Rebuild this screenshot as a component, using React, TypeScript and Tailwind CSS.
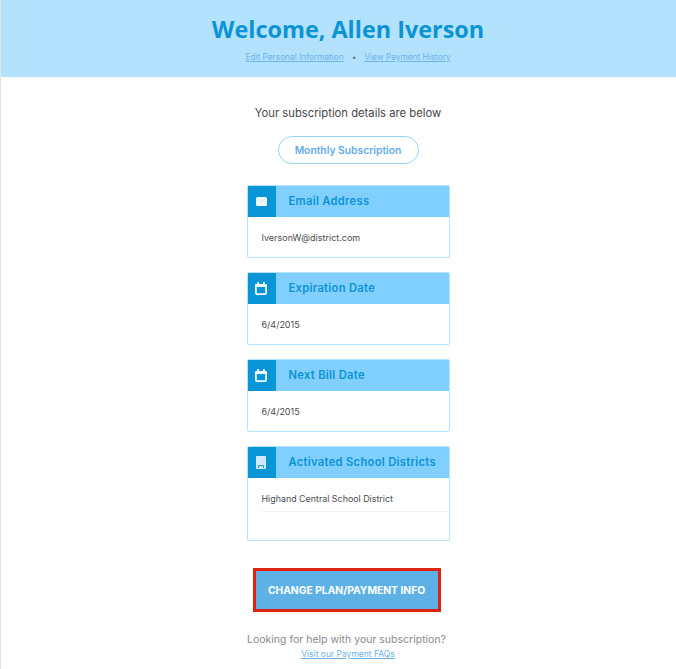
const sans = "font-['Inter','Liberation_Sans',sans-serif]"

const MailIcon = () => (
  <svg width="11" height="9" viewBox="0 0 11 9">
    <rect width="11" height="9" rx="1.5" fill="#eef8ff" />
    <path d="M0.5 1.5 L5.5 5 L10.5 1.5" fill="none" stroke="#cfeaff" strokeWidth="0.8" />
  </svg>
)

const CalendarIcon = () => (
  <svg width="12" height="13" viewBox="0 0 12 13">
    <rect x="0.9" y="2.9" width="10.2" height="9.2" rx="1.2" fill="none" stroke="#f2faff" strokeWidth="1.8" />
    <rect x="0" y="2.4" width="12" height="2.6" fill="#f2faff" />
    <rect x="2.2" y="0" width="1.8" height="3" fill="#f2faff" />
    <rect x="8" y="0" width="1.8" height="3" fill="#f2faff" />
  </svg>
)

const BookIcon = () => (
  <svg width="10" height="13" viewBox="0 0 10 13">
    <rect width="10" height="13" rx="1" fill="#cfeaff" />
    <path d="M2.5 12 V9.6 H7.5 V12" fill="none" stroke="#0b96d6" strokeWidth="1" />
  </svg>
)

const Card = ({ icon, title, children }: { icon: React.ReactNode; title: string; children: React.ReactNode }) => (
  <div className="w-[203px] rounded-[2px] border border-[#b5e2ff] bg-white overflow-hidden">
    <div className="-mx-px -mt-px flex h-[32px] bg-[#80cfff]">
      <div className="flex w-[29px] items-center justify-center bg-[#0995d6]">{icon}</div>
      <div className={`pl-[13px] text-[11.2px] font-semibold leading-[32px] tracking-[0.3px] text-[#0a93d5] ${sans}`}>{title}</div>
    </div>
    {children}
  </div>
)

const Value = ({ children }: { children: React.ReactNode }) => (
  <div className={`h-[40px] pl-[14px] text-[9px] leading-[42px] text-[#4a4a50] ${sans}`}>{children}</div>
)

export default function App() {
  return (
    <div className="flex h-[669px] flex-col items-center overflow-hidden border-l border-[#e4e4e4] bg-white">
      <div className="flex h-[77px] w-full shrink-0 flex-col items-center bg-[#b3e2ff] pl-[19px]">
        <h1 className="mt-[11px] font-['Open_Sans',sans-serif] text-[23.4px] font-bold leading-[36px] text-[#0a93d5]">
          Welcome, Allen Iverson
        </h1>
        <div className={`mt-[4px] flex items-center text-[8.3px] leading-[12px] text-[#6db3e6] ${sans}`}>
          <span className="underline">Edit Personal Information</span>
          <span className="mx-[8px] text-[#5f7f95]">•</span>
          <span className="underline">View Payment History</span>
        </div>
      </div>

      <div className="flex w-full flex-col items-center pl-[19px]">
        <p className={`mt-[28px] text-[11.25px] leading-[16px] text-[#45454d] ${sans}`}>Your subscription details are below</p>

        <div className={`mt-[15px] flex h-[28px] w-[141px] items-center justify-center rounded-full border border-[#9bd2f3] pt-[1px] text-[10.3px] font-semibold text-[#64ade6] ${sans}`}>
          Monthly Subscription
        </div>

        <div className="mt-[21px] flex flex-col gap-[14px]">
          <Card icon={<MailIcon />} title="Email Address"><Value>IversonW@district.com</Value></Card>
          <Card icon={<CalendarIcon />} title="Expiration Date"><Value>6/4/2015</Value></Card>
          <Card icon={<CalendarIcon />} title="Next Bill Date"><Value>6/4/2015</Value></Card>
          <Card icon={<BookIcon />} title="Activated School Districts">
            <div className={`ml-[14px] h-[34px] border-b border-[#efefef] text-[8.9px] leading-[42px] text-[#4a4a50] ${sans}`}>
              Highand Central School District
            </div>
            <div className="h-[28px]" />
          </Card>
        </div>

        <div className={`mt-[27px] mr-[3px] flex h-[44px] w-[188px] items-center justify-center border-[3px] border-[#e02210] bg-[#5eb1e4] pt-[1px] text-[10.3px] font-bold text-white ${sans}`}>
          CHANGE PLAN/PAYMENT INFO
        </div>

        <p className={`mt-[21px] mr-[3px] text-[10.5px] leading-[14px] text-[#8a8a8e] ${sans}`}>Looking for help with your subscription?</p>
        <span className={`mt-[1px] text-[8.5px] leading-[12px] text-[#6db3e6] underline ${sans}`}>Visit our Payment FAQs</span>
      </div>
    </div>
  )
}
